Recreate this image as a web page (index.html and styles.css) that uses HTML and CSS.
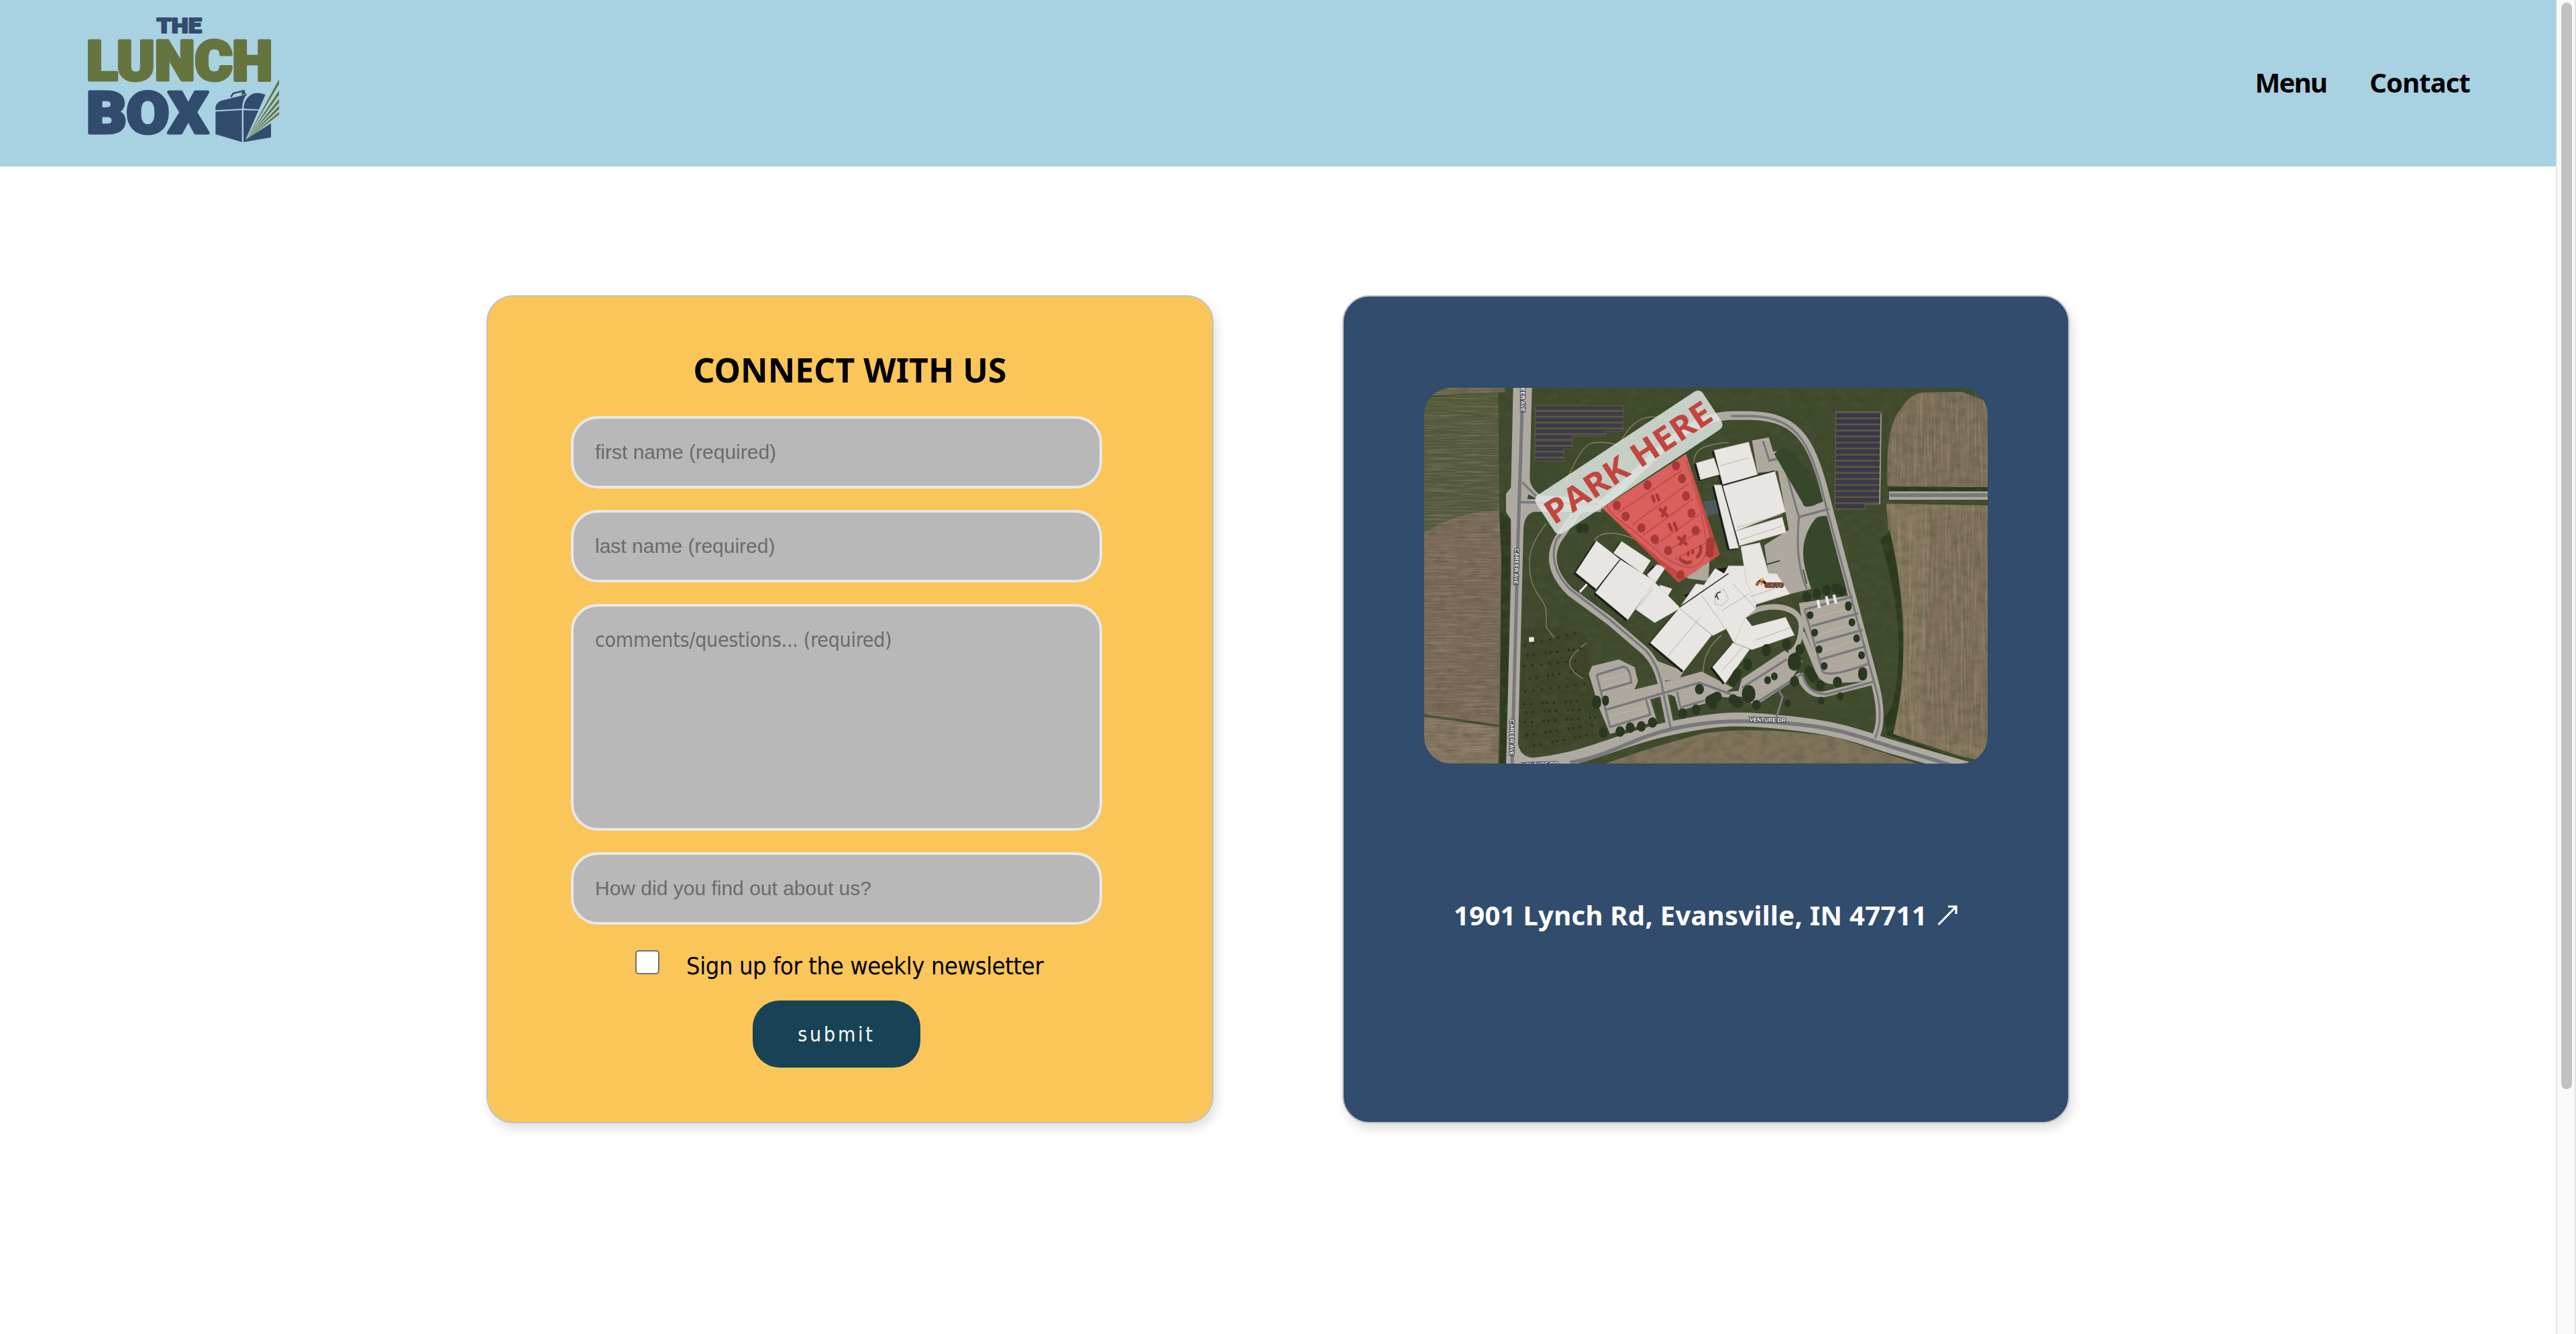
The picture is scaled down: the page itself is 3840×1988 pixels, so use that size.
FILE: index.html
```html
<!DOCTYPE html>
<html lang="en">
<head>
<meta charset="utf-8">
<title>The Lunch Box - Contact</title>
<link rel="stylesheet" href="styles.css">
</head>
<body>
<div class="page">
  <header class="header">
    <svg class="logo" viewBox="0 0 290 200" role="img" aria-label="The Lunch Box">
      <g class="logo-text">
        <text class="navy small" x="103.5" y="37.2" textLength="67" lengthAdjust="spacingAndGlyphs">THE</text>
        <text class="olive lunch" x="-1" y="107" textLength="277" lengthAdjust="spacingAndGlyphs">LUNCH</text>
        <text class="navy box" x="-1" y="185.5" textLength="181" lengthAdjust="spacingAndGlyphs">BOX</text>
      </g>
      <!-- lunch box with an open book beside it -->
      <g transform="translate(-30 -12) scale(.33333)">
        <path transform="translate(0 36)" fill="none" d=""/>
        <path fill="#314c6d" d="M664 499 782 492V635L664 600ZM664 493V478Q668 457 690 450L806 421Q784 440 783 486ZM790 486Q790 452 812 432 842 404 887 424L858 489ZM789 493 856 494 798 625 912 551V614L789 635Z"/>
        <path fill="none" stroke="#314c6d" stroke-width="8" d="M733 434 742 418 789 406 783 424M790 409 797 422"/>
        <path fill="#66743f" d="M800 625 948 354V376ZM801 625 948 404V424ZM802 625 948 442V460ZM802 625 948 473V488ZM802 625 948 500V512Z"/>
      </g>
    </svg>
    <nav class="nav"><a class="nav-menu">Menu</a><a class="nav-contact">Contact</a></nav>
  </header>
  <main class="main">
    <section class="card form-card">
      <h2 class="title">CONNECT WITH US</h2>
      <form class="form">
        <input class="field" type="text" placeholder="first name (required)">
        <input class="field" type="text" placeholder="last name (required)">
        <textarea class="field area" placeholder="comments/questions... (required)"></textarea>
        <input class="field" type="text" placeholder="How did you find out about us?">
        <label class="signup"><input class="check" type="checkbox"><span>Sign up for the weekly newsletter</span></label>
        <button class="submit" type="button">submit</button>
      </form>
    </section>
    <section class="card map-card">
      <svg class="map" viewBox="0 0 840 560">
        <defs>
          <filter id="grain" x="0" y="0" width="100%" height="100%">
            <feTurbulence type="fractalNoise" baseFrequency=".06 .09" numOctaves="4" seed="4"/>
            <feColorMatrix values="0 0 0 0 .08  0 0 0 0 .1  0 0 0 0 .05  2.6 0 0 0 -1.05"/>
          </filter>
          <filter id="rows" x="0" y="0" width="100%" height="100%">
            <feTurbulence type="fractalNoise" baseFrequency=".02 .4" numOctaves="3" seed="8"/>
            <feColorMatrix values="0 0 0 0 .75  0 0 0 0 .68  0 0 0 0 .52  2.4 0 0 0 -1.05"/>
          </filter>
          <filter id="cols" x="0" y="0" width="100%" height="100%">
            <feTurbulence type="fractalNoise" baseFrequency=".3 .015" numOctaves="3" seed="3"/>
            <feColorMatrix values="0 0 0 0 .75  0 0 0 0 .68  0 0 0 0 .5  2.4 0 0 0 -1.05"/>
          </filter>
          <pattern id="panelsL" width="30" height="22.7" patternUnits="userSpaceOnUse" y="118"><rect width="30" height="23" fill="#5b5740"/><rect width="30" height="15" fill="#3c3b49"/></pattern>
          <pattern id="panelsR" width="30" height="23.6" patternUnits="userSpaceOnUse" y="146"><rect width="30" height="24" fill="#5f533f"/><rect width="30" height="16" fill="#38384a"/></pattern>
          <clipPath id="westFields"><path d="M0 0H110L113 190 110 560H0Z"/></clipPath>
          <clipPath id="eastFields"><path d="M693 175H840V560L702 515 715 440 710 300ZM693 145V100L700 50 740 10 840 5V145Z"/></clipPath>
        </defs>
        <rect width="840" height="560" fill="#3f4a2c"/>
        <g transform="translate(-23 -18) scale(.33333 .38265)">
          <path fill="#55593b" d="M69 85 400 65 405 520Q240 520 69 610Z"/>
          <path fill="#7a6856" d="M69 610Q240 520 405 525L415 700 405 1360 69 1318Z"/>
          <path fill="#857460" d="M69 1328 405 1368 400 1510H69Z"/>
          <path fill="#6b6648" d="M69 47H430V64L69 78Z"/>
          <path fill="#2c3a1f" d="M405 530 455 560 440 1510H408L414 700Z"/>
          <path fill="#7d6e5a" d="M2140 430V330Q2145 180 2200 130 2240 70 2300 65L2470 62 2589 100V435Z"/>
          <path fill="#85765d" d="M2135 498 2589 505V1505L2460 1480 2165 1395Q2220 1200 2210 1000 2200 760 2145 600Z"/>
          <path fill="#7b6b59" d="M2330 520 2589 530V1460L2300 1370Z" opacity=".7"/>
          <path fill="#2b3a1e" d="M2140 434H2589V448H2140ZM2165 1395Q2225 1180 2210 950 2195 760 2150 600L2110 640Q2200 900 2190 1100 2180 1300 2125 1330L2140 1400 2470 1500Z"/>
          <path fill="#82735b" d="M880 1510Q1100 1440 1320 1392 1600 1362 1920 1410L2270 1510Z"/>
          <path fill="#3d4428" d="M510 985 700 975 790 1010 800 1100 840 1290 900 1390 700 1440 560 1470 500 1400Z"/>
        </g>
        <rect width="840" height="560" filter="url(#grain)" opacity=".36"/>
        <g clip-path="url(#westFields)"><rect width="130" height="560" filter="url(#rows)" opacity=".2"/></g>
        <g clip-path="url(#eastFields)"><rect x="680" width="160" height="560" filter="url(#cols)" opacity=".2"/></g>
        <g transform="translate(-23 -18) scale(.33333 .38265)">
          <!-- solar arrays -->
          <path fill="url(#panelsL)" stroke="#6b6344" stroke-width="2" d="M566 116H958V215H880V236H730V285H692V332H564Z"/>
          <path fill="url(#panelsR)" stroke="#6b6344" stroke-width="3" d="M1910 140H2115L2108 500H2040V520H1906Z"/>
          <path fill="none" stroke="#a19c93" stroke-width="5" d="M2112 148 2106 500"/>
          <!-- footpaths -->
          <path fill="none" stroke="#857f66" stroke-width="4" d="M700 420Q770 270 820 262T940 270Q1000 160 1090 160T1180 200M615 575Q540 660 540 720C535 850 610 860 615 920V980L650 1020M780 1180Q720 1150 720 1120T795 1040M830 640Q860 605 930 615T1060 660M1275 340Q1275 290 1330 275T1430 260M1320 1190Q1300 1080 1400 1010"/>
          <!-- pavement and car parks -->
          <g fill="#aea89f">
            <path d="M1535 252 1610 240 1630 295 1675 288 1708 318 1765 505 1840 495 1880 480V545Q1830 545 1820 555 1770 610 1765 670 1765 750 1800 830L1705 850 1610 780 1590 660 1700 600 1650 370 1560 378Z"/>
            <path d="M1745 885 1980 855 2085 1190 1900 1197 1840 1160 1760 960Z"/>
            <path d="M820 1130 940 1105 1010 1135 1025 1190 1010 1222 1110 1200 1310 1152 1450 1215 1330 1275 1210 1305 1160 1240 1080 1260 1110 1345 900 1395 850 1290 805 1160Z"/>
            <path d="M1490 1180 1680 1070 1760 1110 1700 1200 1550 1285 1470 1240Z"/>
            <path d="M865 515 1240 305 1350 640 1340 800 1250 790 1130 720Z"/>
            <path d="M1110 1110 1230 1150 1210 1180 1130 1190Z"/>
          </g>
          <g fill="none" stroke="#aea9a1">
            <path stroke-width="34" d="M740 490 870 500 760 520 665 640Q605 740 720 840L900 955 1060 1075Q1120 1130 1135 1220L1172 1375M860 500C1050 380 1200 160 1440 155H1530C1760 160 1810 270 1880 520L2080 1180Q2130 1340 2085 1410"/>
            <path stroke-width="22" d="M1320 1190Q1370 1250 1450 1240T1560 1280M1740 1160Q1780 1250 1860 1240L2090 1190M1510 930C1600 880 1760 890 1755 980S1700 1080 1700 1080M1760 1000 1830 1150Q1850 1190 1900 1190"/>
            <path stroke-width="54" d="M460 1520C760 1515 900 1425 1160 1375S1500 1335 1700 1352 2000 1400 2140 1440L2500 1530"/>
            <path stroke-width="32" d="M2148 467H2600"/>
          </g>
          <path fill="#aea9a1" d="M467 47H551L541 400Q545 440 590 465L860 480V530H560Q515 540 513 600L489 1430Q495 1490 580 1490V1520H435L457 800V560L435 530V460L457 435Z"/>
          <g fill="none" stroke="#79797c" stroke-width="9">
            <path stroke-width="15" d="M510 47 490 600 462 1515M720 1507C900 1480 1000 1410 1180 1375S1500 1340 1700 1354 2000 1400 2140 1440L2420 1515M2150 465H2600"/>
            <path d="M508 415 570 470M500 492 850 500M760 520 660 640Q620 740 720 830L900 950 1060 1070Q1120 1130 1135 1220L1172 1375M1440 157H1530C1750 162 1800 270 1870 520L2080 1190Q2130 1330 2085 1410M1585 255 1612 330 1670 320 1745 550 1880 518M1745 550Q1725 720 1780 830M1770 910 1985 860M1770 910 1850 1150Q1870 1180 2060 1120M1800 975 2010 925M1820 1040 2030 990M1840 1105 2045 1053M840 1165 960 1133Q990 1135 995 1195L860 1228M840 1165 900 1368 1080 1320 1062 1262M885 1300 1300 1195 1440 1240M1200 1230 1215 1292 1320 1265M1490 1215 1690 1105M1560 1270 1760 1160Q1780 1240 1870 1240L2085 1190M1650 1220 1672 1250 1645 1330"/>
          </g>
          <path fill="none" stroke="#c7c2b8" stroke-width="2" d="M870 1185 975 1160M880 1210 980 1185M900 1325 1060 1290M1810 945 1990 900M1830 1010 2010 960M1850 1075 2030 1020"/>
          <!-- grass islands -->
          <path fill="#37472a" d="M1635 305Q1680 250 1740 320C1790 380 1850 430 1845 490Q1800 515 1770 508ZM1835 550 1870 552 1960 840 1800 820Q1740 700 1780 630 1805 560 1835 550ZM1165 1240 1190 1250 1215 1330 1185 1320ZM1095 1265 1130 1280 1115 1340ZM535 462 575 480H530ZM800 840 850 880 830 890Z"/>
          <!-- buildings: shade, then roofs -->
          <g>
            <path fill="#171b17" transform="translate(-9 5)" d="M838 642 945 715 840 832 745 765ZM952 645 1082 720 1045 770 915 690ZM1100 735 1150 745 1100 810 1065 775ZM1210 905 1355 1010 1230 1150 1080 1040ZM1450 1040 1525 1065 1415 1198 1358 1135ZM1365 290 1520 258 1560 385 1405 425ZM1285 340 1365 320 1390 385 1305 405ZM1365 425 1400 425 1475 670 1435 675ZM1240 850 1440 770 1300 900ZM1370 750 1440 740V800ZM1535 970 1685 935V950ZM945 715 1100 800 980 950 835 845Z"/>
            <g fill="#e8e5e2" stroke="#bcb6ac" stroke-width="1.5">
              <path d="M838 642 945 715 840 832 745 765Z"/><path d="M952 645 1082 720 1045 770 915 690Z"/><path d="M1110 735 1150 745 1100 810 1065 775Z"/><path d="M1125 815 1178 830 1150 870 1100 850Z"/><path d="M1095 800 1215 905 1100 962 1015 910Z"/><path d="M945 715 1100 800 980 950 835 845Z"/>
              <path d="M1210 905 1355 1010 1230 1150 1080 1040Z"/>
              <path d="M1285 810 1320 815 1370 750 1410 770 1430 740 1510 740 1560 860 1550 910 1505 945 1535 1065 1450 1035 1420 985 1360 1012 1210 905Z"/>
              <path d="M1505 940 1535 975 1685 940 1725 1010 1535 1067 1455 1040Z"/><path d="M1450 1040 1525 1065 1415 1198 1358 1135Z"/>
              <path d="M1365 290 1520 258 1560 385 1405 425Z"/><path d="M1285 340 1365 320 1390 385 1305 405Z"/><path d="M1365 425H1400L1475 670 1435 675Z"/><path d="M1405 430 1638 372 1685 530 1460 605Z"/><path d="M1460 605 1670 550 1688 610 1480 662Z"/>
              <path d="M1485 665 1570 650 1610 770 1645 770 1705 850 1555 890 1510 800Z"/>
            </g>
            <path fill="none" stroke="#a79f93" stroke-width="2" d="M1160 1090 1300 945M1310 855 1420 990M1450 810 1550 905M1400 915 1520 850M1395 350 1520 320M1470 590 1670 540M1480 640 1670 585M1530 860 1680 815M1400 1150 1500 1050M1550 1030 1710 980M1030 900 1090 830M1370 850 1410 830 1430 870 1400 895 1370 890Z"/>
            <path fill="none" stroke="#252724" stroke-width="4" d="M840 832 945 716M745 765 835 645M1210 902 1430 770M1400 425 1475 655M1405 425 1636 370M1370 865 1382 845 1395 842M1375 850 1385 872M1600 735 1660 720M1763 755 1780 810"/>
            <path fill="#4b5b5d" d="M1318 490 1372 482 1386 535 1332 548Z"/>
            <path fill="#eceae6" d="M1823 875 1835 872 1842 903 1830 906ZM1861 860 1873 857 1882 890 1870 893ZM1895 854 1907 851 1917 885 1905 888ZM538 1018H560V1036H538ZM762 838 795 808 800 815 767 846Z"/>
          </g>
          <!-- trees -->
          <g fill="none" stroke="#2a3821" stroke-linecap="round">
            <path stroke-width="30" d="M1795 932v1M1815 1000v1M1835 1065v1M1858 1130v1M1982 960v1M2003 1022v1M2025 1088v1M1966 893v8M1605 1185v1M1635 1170v1M1845 1265v1M1930 1248v1M1695 1275v1M765 590v8M790 590v8M880 1260v10"/>
            <path stroke-width="40" d="M1780 860v1M1825 848v1M1868 835v1M1910 828 1935 838M2030 1155v12M1917 1192v1M1840 1205v1M1790 1150 1810 1175M1725 1190v1M1600 1065v8M1515 1120v8M1470 1160 1450 1190M1690 1045v1M1750 1065v1M840 1265v12M870 1390v1M945 1385v1M990 1370v1M1040 1365v1M1090 1350v1M1225 1315v1M1285 1300v1M1300 1220v1M1345 1265 1380 1250M1360 1280v1M1450 1260 1475 1275M1555 1282v1"/>
            <path stroke-width="60" d="M1725 1110v8M1520 1235v8"/>
          </g>
          <g fill="none" stroke="#26341c" stroke-width="10" stroke-linecap="round">
            <path stroke-dasharray="1 37" d="M520 1050 760 1000M515 1130 770 1110M520 1230 800 1200"/>
            <path stroke-dasharray="1 29 1 52 1 20" d="M530 1090 790 1060M540 1180 750 1150M515 1280 800 1265M525 1310 790 1300M520 1350 840 1330M530 1400 830 1360M560 1440 800 1400"/>
          </g>
          <!-- highlighted parking area -->
          <path fill="#e64b49" fill-opacity=".78" d="M865 515 1240 305 1392 697 1207 806Z"/>
          <g fill="none" stroke="#b8504e" stroke-width="5">
            <path d="M890 500Q870 520 1000 600L1150 710Q1290 790 1330 690 1340 600 1240 330M1000 580 1250 420M1050 620 1270 480M1100 660 1300 540M1140 690 1315 600M1190 715 1330 650M940 530 1220 370"/>
          </g>
          <g fill="none" stroke="#a93936" stroke-linecap="round">
            <path stroke-width="36" d="M1195 350v1M1222 400v1M1240 468v1M1264 535v1M1283 603v1M970 547v1M1040 592v1M1100 636v1M1160 680v1M1068 425v1M930 505v1M1350 645 1345 690M1215 775v1"/>
            <path stroke-width="14" d="M1090 470 1097 488M1110 465 1118 483M1125 520 1155 545M1148 515 1135 545M1165 580 1175 600M1188 575 1198 600M1207 630 1240 655M1235 625 1215 655M1250 690v6M1270 682v6M1215 715Q1240 735 1260 725M1290 705Q1310 690 1305 665"/>
          </g>
        </g>
        <!-- marker banner -->
        <g transform="translate(305 111) rotate(-33.4)">
          <rect x="-149" y="-34" width="298" height="68" rx="9" fill="#e0e8e3" fill-opacity=".84"/>
          <text class="park" x="-145" y="17" textLength="288" lengthAdjust="spacingAndGlyphs">PARK HERE</text>
        </g>
        <g class="street">
          <text transform="translate(135.3 239) rotate(91.5)" textLength="54">CAREER AVE</text>
          <text transform="translate(128 494) rotate(90.5)" textLength="54">CAREER AVE</text>
          <text transform="translate(144 0) rotate(90)" textLength="36">EER AVE</text>
          <text x="485" y="497" transform="rotate(1.5 485 497)" textLength="54">VENTURE DR</text>
          <text x="146" y="565" textLength="54" transform="rotate(-2 146 565)">VENTURE DR</text>
        </g>
        <path fill="none" stroke="#3b2a22" stroke-width="4" stroke-linecap="round" d="M496 293q6-10 12-2"/>
        <path fill="none" stroke="#d97a3f" stroke-width="2" d="M495 295q2-7 8-5v4M503 287l3-2"/>
        <circle cx="503.500" cy="286" r="2.500" fill="#f39a3c"/>
        <text class="sictc" x="508" y="296.500" textLength="27" lengthAdjust="spacingAndGlyphs">SICTC</text>
      </svg>
      <a class="address">1901 Lynch Rd, Evansville, IN 47711<svg class="arrow" viewBox="0 0 32 32"><path d="M2.500 30 28 4M17 3H29V14" fill="none" stroke="#fff" stroke-width="3.200"/></svg></a>
    </section>
  </main>
</div>
<div class="scrollbar"><div class="thumb"></div></div>
</body>
</html>
```
FILE: styles.css
```css
* { box-sizing: border-box; }
body { margin: 0; display: flex; height: 1988px; overflow: hidden; background: #fff; color: #000; font-family: "DejaVu Sans Condensed", "DejaVu Sans", sans-serif; }
.page { flex: 1; min-width: 0; }
.header { height: 248px; padding: 12px 128px 0 130px; background: #a8d1e1; display: flex; justify-content: space-between; }
.logo { width: 290px; height: 200px; overflow: visible; }
.logo-text { font-family: Roboto, sans-serif; font-weight: 900; stroke-linejoin: round; }
.navy { fill: #314c6d; stroke: #314c6d; }
.olive { fill: #66743f; stroke: #66743f; }
.small { font-size: 31px; stroke-width: 2; }
.lunch { font-size: 81px; stroke-width: 5; }
.box { font-size: 86px; stroke-width: 5; }
.nav { display: flex; gap: 64px; font: 700 40px/60px "Noto Sans", sans-serif; padding-top: 81px; }
.nav-menu { letter-spacing: -1.7px; }
.nav-contact { letter-spacing: -.9px; }
.main { display: flex; gap: 192px; padding: 192px 0 0 725px; }
.card { width: 1084px; height: 1234px; border: 2px solid #c2c2c2; border-radius: 40px; box-shadow: 4px 8px 16px rgba(0,0,0,.13); }
.form-card { background: #fac659; padding: 79px 124px 0; }
.title { margin: 0 0 39px; text-align: center; font: 700 50px/60px "Noto Sans", sans-serif; }
.form { width: 792px; display: flex; flex-direction: column; }
.field { width: 792px; height: 108px; margin: 0 0 32px; padding: 0 32px; border: 4px solid #e8e8e8; border-radius: 40px; background: #b8b8b8; font: 30px "Liberation Sans", Arial, sans-serif; }
.field::placeholder { color: #6b6b6b; opacity: 1; }
.area { height: 338px; resize: none; padding-top: 32px; font: 30px/36px "DejaVu Sans Condensed", sans-serif; letter-spacing: -.25px; }
.signup { display: flex; gap: 40px; font-size: 36px; line-height: 47px; letter-spacing: -.4px; padding-left: 96px; margin-top: 6px; }
.check { appearance: none; width: 36px; height: 36px; margin: 0; border: 2px solid #6f6f6f; border-radius: 5px; background: #fff; }
.submit { width: 250px; height: 100px; align-self: center; margin-top: 28px; border: 0; border-radius: 40px; background: #184356; color: #fff; font: 30px "DejaVu Sans Condensed", sans-serif; letter-spacing: 3.8px; }
.map-card { background: #314c6d; padding: 136px 120px 0; }
.map { display: block; width: 840px; height: 560px; border-radius: 40px; }
.park { font: 700 49px "Open Sans", sans-serif; fill: #c2453e; }
.street { font: 700 8.5px "Liberation Sans", sans-serif; fill: #fff; stroke: #2f3440; stroke-width: 2px; paint-order: stroke; }
.sictc { font: 700 9px "Liberation Sans", sans-serif; fill: #d9763d; stroke: #33221b; stroke-width: 2px; paint-order: stroke; }
.address { display: flex; justify-content: center; align-items: center; gap: 14px; margin-top: 196px; font: 700 40px/60px "Noto Sans", sans-serif; letter-spacing: .28px; color: #fff; }
.arrow { width: 32px; height: 32px; }
.scrollbar { width: 30px; border: solid #e4e4e4; border-width: 0 2px; background: #fafafa; padding: 4px 4px 0 6px; }
.thumb { width: 16px; height: 1619px; border-radius: 8px; background: #c1c1c1; }
```
